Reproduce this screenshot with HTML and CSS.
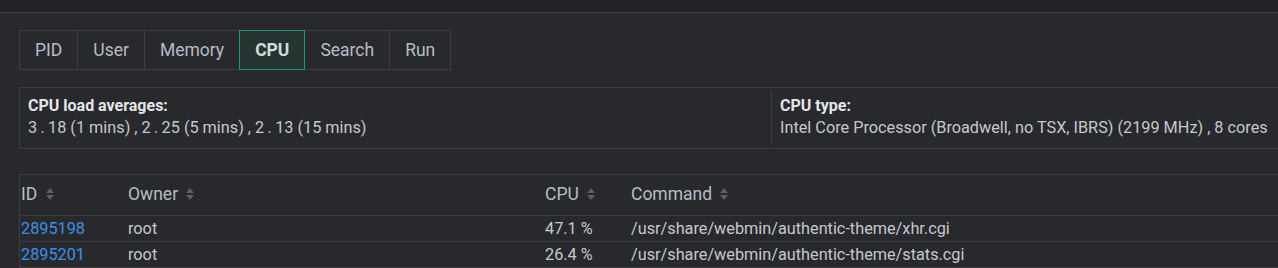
FILE: index.html
```html
<!DOCTYPE html>
<html lang="en">
<head>
  <meta charset="UTF-8">
  <title>Running Processes</title>
  <link rel="stylesheet" href="styles.css">
</head>
<body>

  <div class="topbar"></div>

  <div class="content">
    <ul class="tabs">
      <li>PID</li>
      <li>User</li>
      <li>Memory</li>
      <li class="active">CPU</li>
      <li>Search</li>
      <li>Run</li>
    </ul>

    <div class="info">
      <div class="info-cell load">
        <b>CPU load averages:</b>
        <span>3&thinsp;.&thinsp;18 (1 mins) , 2&thinsp;.&thinsp;25 (5 mins) , 2&thinsp;.&thinsp;13 (15 mins)</span>
      </div>
      <div class="info-cell type">
        <b>CPU type:</b>
        <span>Intel Core Processor (Broadwell, no TSX, IBRS) (2199 MHz) , 8 cores</span>
      </div>
    </div>

    <table class="procs">
      <thead>
        <tr>
          <th class="col-id">ID <svg class="sort" viewBox="0 0 8 14"><path d="M0 6 L4 1 L8 6 Z M0 8 L4 13 L8 8 Z"/></svg></th>
          <th class="col-owner">Owner <svg class="sort" viewBox="0 0 8 14"><path d="M0 6 L4 1 L8 6 Z M0 8 L4 13 L8 8 Z"/></svg></th>
          <th class="col-cpu">CPU <svg class="sort" viewBox="0 0 8 14"><path d="M0 6 L4 1 L8 6 Z M0 8 L4 13 L8 8 Z"/></svg></th>
          <th>Command <svg class="sort" viewBox="0 0 8 14"><path d="M0 6 L4 1 L8 6 Z M0 8 L4 13 L8 8 Z"/></svg></th>
        </tr>
      </thead>
      <tbody>
        <tr>
          <td><a href="#">2895198</a></td>
          <td>root</td>
          <td>47.1 %</td>
          <td>/usr/share/webmin/authentic-theme/xhr.cgi</td>
        </tr>
        <tr>
          <td><a href="#">2895201</a></td>
          <td>root</td>
          <td>26.4 %</td>
          <td>/usr/share/webmin/authentic-theme/stats.cgi</td>
        </tr>
      </tbody>
    </table>
  </div>

</body>
</html>
```

FILE: styles.css
```css
body {
  margin: 0;
  background: #28292d;
  color: #c6c8cc;
  font-family: Roboto, "Noto Sans", sans-serif;
  font-size: 16.25px;
  overflow: hidden;
}

.topbar {
  height: 12px;
  background: #222327;
  border-bottom: 1px solid #3e3f43;
}

.content {
  padding: 17px 0 0 19px;
}

.tabs {
  display: flex;
  list-style: none;
  margin: 0;
  padding: 0;
}

.tabs li {
  height: 38px;
  line-height: 38px;
  padding: 0 15px;
  border: 1px solid #3e3f43;
  margin-right: -1px;
  font-size: 17.5px;
  color: #b6bcc5;
}

.tabs li.active {
  position: relative;
  background: #253430;
  border-color: #1d9a6c;
  color: #d6d8da;
  font-weight: bold;
}

.info {
  display: flex;
  margin-top: 17px;
  border-top: 1px solid #3e3f43;
  border-bottom: 1px solid #3e3f43;
  border-left: 1px solid #3e3f43;
  height: 60px;
}

.info-cell {
  display: flex;
  flex-direction: column;
  padding: 8px 8px 0 8px;
}

.info-cell b {
  color: #e4e5e7;
  font-size: 16px;
  line-height: 20px;
}

.info-cell span {
  line-height: 24px;
}

.load {
  width: 735px;
}

.type {
  margin: 3px 0;
  padding-top: 5px;
  border-left: 1px solid #3e3f43;
  white-space: nowrap;
}

.procs {
  margin-top: 25px;
  border-collapse: collapse;
  width: 1300px;
  border-left: 1px solid #3e3f43;
}

.procs th,
.procs td {
  text-align: left;
  padding: 0 1px;
  border-top: 1px solid #3e3f43;
  border-bottom: 1px solid #3e3f43;
}

.procs th {
  height: 38px;
  padding-bottom: 2px;
  font-weight: normal;
  font-size: 17.5px;
  color: #b6bcc5;
}

.procs td {
  height: 25px;
}

.col-id {
  width: 105px;
}

.col-owner {
  width: 415px;
}

.col-cpu {
  width: 84px;
}

.procs a {
  color: #3f8fe8;
  text-decoration: none;
}

.sort {
  width: 8px;
  height: 14px;
  margin-left: 4px;
  vertical-align: -1px;
  fill: #5c5e63;
}
```
